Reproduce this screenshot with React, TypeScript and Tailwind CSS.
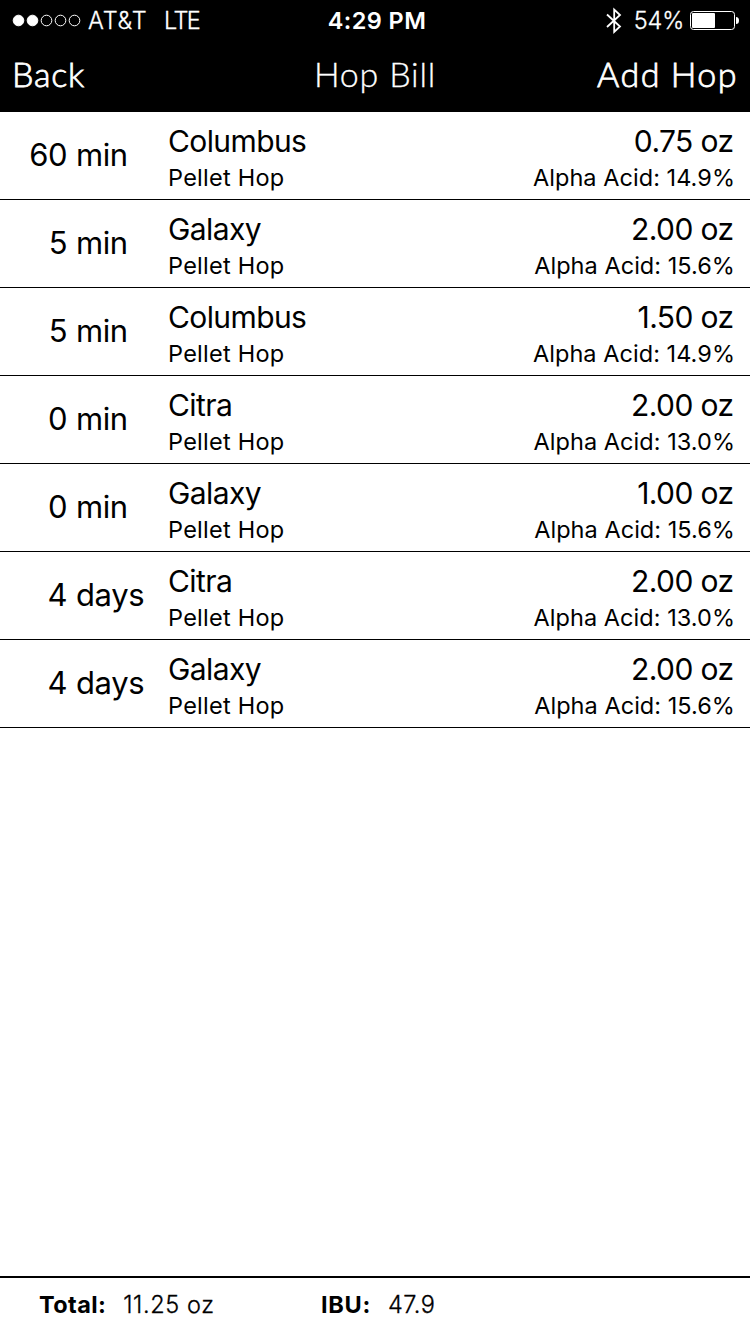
const rows = [
  ["60", "min", "Columbus", "0.75 oz", "14.9%"],
  ["5", "min", "Galaxy", "2.00 oz", "15.6%"],
  ["5", "min", "Columbus", "1.50 oz", "14.9%"],
  ["0", "min", "Citra", "2.00 oz", "13.0%"],
  ["0", "min", "Galaxy", "1.00 oz", "15.6%"],
  ["4", "days", "Citra", "2.00 oz", "13.0%"],
  ["4", "days", "Galaxy", "2.00 oz", "15.6%"],
];

export default function App() {
  return (
    <div className="flex h-[1334px] w-[750px] flex-col bg-white font-['Inter',sans-serif] text-black">
      <header className="h-28 shrink-0 bg-black text-white">
        <div className="grid h-[42px] grid-cols-3 items-center pl-3 pr-[11px] text-[23.5px] leading-[28px]">
          <div className="flex items-center font-light [-webkit-text-stroke:0.3px_white]">
            <svg width="70" height="14" viewBox="0 0 70 14" fill="none" stroke="white">
              <circle cx="6.5" cy="6.5" r="5.3" fill="white" />
              <circle cx="20.5" cy="6.5" r="5.3" fill="white" />
              <circle cx="34.5" cy="6.5" r="5.3" />
              <circle cx="48.5" cy="6.5" r="5.3" />
              <circle cx="62.5" cy="6.5" r="5.3" />
            </svg>
            <span className="ml-[6px] w-[76px] whitespace-nowrap tracking-[0.8px]">AT&amp;T</span>
            <span className="tracking-[-1.6px]">LTE</span>
          </div>
          <span className="pl-[3px] text-center font-semibold tracking-[0.45px]">4:29 PM</span>
          <div className="flex items-center justify-end">
            <svg width="16" height="28" viewBox="0 0 16 28" fill="none" stroke="white" strokeWidth="1.8">
              <path d="M1 7.5 14 19.5 8.2 25V2.5L14 8 1 20" />
            </svg>
            <span className="ml-[12px] font-light tracking-[-0.2px] [-webkit-text-stroke:0.3px_white]">54%</span>
            <svg className="ml-1.5" width="49" height="20" viewBox="0 0 49 20" fill="none">
              <rect x=".5" y=".5" width="44" height="18" rx="3" stroke="white" />
              <rect x="2" y="2" width="23" height="15" rx="1" fill="white" />
              <path d="M46 6q3 0 3 3.5T46 13z" fill="white" />
            </svg>
          </div>
        </div>
        <nav className="grid h-[63px] grid-cols-3 items-center pl-3 pr-3 font-['Lato',sans-serif] text-[34px] font-light">
          <span className="tracking-[0.8px] [-webkit-text-stroke:0.8px_white]">Back</span>
          <span className="text-center tracking-[0.8px] [-webkit-text-stroke:0.3px_white]">Hop Bill</span>
          <span className="text-right tracking-[1.5px] [-webkit-text-stroke:0.8px_white] [word-spacing:-1px]">Add Hop</span>
        </nav>
      </header>
      <main className="flex-1">
        {rows.map(([n, unit, name, weight, acid], i) => (
          <div key={i} className="flex h-[88px] border-b border-black">
            <div className="flex w-[168px] items-center text-[31px] tracking-[-0.5px]">
              <span className="w-[67px] text-right">{n}</span>
              <span className="ml-[9px] tracking-[-0.4px]">{unit}</span>
            </div>
            <div className="flex flex-1 flex-col pt-[10px]">
              <span className="text-[30px] leading-[38px] tracking-[-0.6px]">{name}</span>
              <span className="pt-px text-[23.5px] leading-[34px] tracking-[0.25px]">Pellet Hop</span>
            </div>
            <div className="flex flex-col pr-[15px] pt-[10px] text-right">
              <span className="pr-[1.5px] text-[30px] leading-[38px] tracking-[-0.6px]">{weight}</span>
              <span className="pt-px text-[23.5px] leading-[34px] tracking-[0.04px]">Alpha Acid: {acid}</span>
            </div>
          </div>
        ))}
      </main>
      <footer className="flex h-[58px] items-center border-t-2 border-black pb-[2px] text-[23.5px]">
        <div className="flex w-[321px] gap-[17px] pl-[39px]">
          <b className="tracking-[0.4px]">Total:</b>
          <span className="font-light tracking-[0.6px] [-webkit-text-stroke:0.3px_black]">11.25 oz</span>
        </div>
        <div className="flex gap-[17px]">
          <b className="tracking-[0.7px]">IBU:</b>
          <span className="font-light tracking-[0.4px] [-webkit-text-stroke:0.3px_black]">47.9</span>
        </div>
      </footer>
    </div>
  );
}
